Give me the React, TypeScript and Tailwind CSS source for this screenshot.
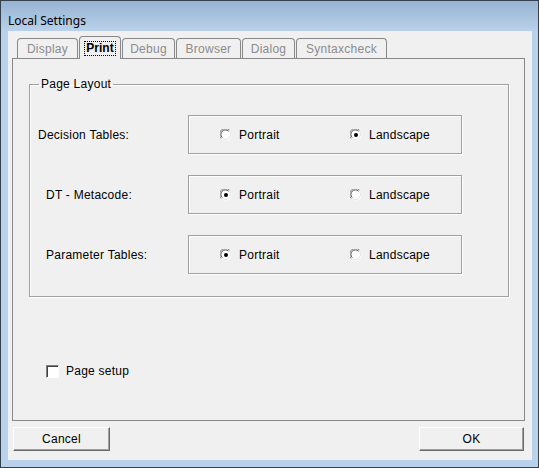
import React from "react";

const font = { fontFamily: '"Liberation Sans", Arial, sans-serif' };

function Radio({ checked }: { checked: boolean }) {
  return (
    <svg width="12" height="12" viewBox="0 0 12 12" className="shrink-0">
      <circle cx="6" cy="6" r="5.5" fill="#ffffff" />
      <path d="M1.2 9.5 A5.3 5.3 0 0 1 9.5 1.2" fill="none" stroke="#8a8a8a" strokeWidth="1" />
      <path d="M2.2 8.6 A4.2 4.2 0 0 1 8.6 2.2" fill="none" stroke="#505050" strokeWidth="1" />
      <path d="M9.8 2.5 A5.3 5.3 0 0 1 2.5 9.8" fill="none" stroke="#e4e4e4" strokeWidth="1" />
      {checked && <circle cx="6" cy="6" r="2" fill="#000000" />}
    </svg>
  );
}

function RadioBox({ portrait }: { portrait: boolean }) {
  return (
    <div className="w-[274px] h-[39px] border border-[#a0a0a0] shadow-[inset_1px_1px_0_#ffffff,1px_1px_0_#ffffff] flex items-center">
      <div className="flex items-center ml-[31px] w-[130px]">
        <Radio checked={portrait} />
        <span className="ml-[7px] text-[12px] tracking-[0.25px] text-black leading-none">Portrait</span>
      </div>
      <div className="flex items-center">
        <Radio checked={!portrait} />
        <span className="ml-[7px] text-[12px] tracking-[0.25px] text-black leading-none">Landscape</span>
      </div>
    </div>
  );
}

function Tab({ label, w, selected }: { label: string; w: number; selected?: boolean }) {
  if (selected) {
    return (
      <div
        className="h-[23px] border border-b-0 border-[#888888] rounded-t-[4px] bg-[#f0f0f0] flex items-center justify-center -mb-px relative z-10 px-[3px]"
        style={{ width: w }}
      >
        <span className="text-[12px] font-bold text-black leading-[13px] outline outline-1 outline-dotted outline-black px-[1px]">
          {label}
        </span>
      </div>
    );
  }
  return (
    <div
      className="h-[20px] border border-b-0 border-[#888888] rounded-t-[4px] flex items-center justify-center text-[12px] tracking-[0.25px] text-[#8c8c8c] leading-none"
      style={{ width: w }}
    >
      {label}
    </div>
  );
}

export default function App() {
  return (
    <div
      className="w-[539px] h-[468px] border border-[#34404c] bg-[#b9d1ea] flex flex-col overflow-hidden"
      style={font}
    >
      <div className="h-[30px] bg-gradient-to-b from-[#98b4d2] to-[#b9d1ea] flex items-center pl-[7px] pt-[10px]">
        <span className="text-[12px] text-black" style={{ fontFamily: '"Noto Sans", "Open Sans", sans-serif' }}>
          Local Settings
        </span>
      </div>
      <div className="ml-[7px] mr-[6px] h-[429px] bg-[#f0f0f0] flex flex-col pt-[4px] px-[4px]">
        <div className="h-[23px] flex items-end pl-[5px]">
          <Tab label="Display" w={61} />
          <div className="w-[1px]" />
          <Tab label="Print" w={42} selected />
          <div className="w-[1px]" />
          <Tab label="Debug" w={53} />
          <div className="w-[1px]" />
          <Tab label="Browser" w={65} />
          <div className="w-[1px]" />
          <Tab label="Dialog" w={53} />
          <div className="w-[1px]" />
          <Tab label="Syntaxcheck" w={91} />
        </div>
        <div className="w-[513px] h-[363px] border border-[#888888] flex flex-col">
          <fieldset className="ml-[16px] mt-[18px] w-[480px] h-[220px] border border-[#a0a0a0] shadow-[inset_1px_1px_0_#ffffff,1px_1px_0_#ffffff] pb-[22px]">
            <legend className="ml-[9px] px-[2px] text-[12px] tracking-[0.25px] text-black leading-[14px]">Page Layout</legend>
            <div className="flex flex-col gap-[21px] mt-[24px]">
              <div className="flex items-center">
                <span className="w-[158px] pl-[8px] text-[12px] tracking-[0.25px] text-black">Decision Tables:</span>
                <RadioBox portrait={false} />
              </div>
              <div className="flex items-center">
                <span className="w-[158px] pl-[16px] text-[12px] tracking-[0.25px] text-black">DT - Metacode:</span>
                <RadioBox portrait={true} />
              </div>
              <div className="flex items-center">
                <span className="w-[158px] pl-[16px] text-[12px] tracking-[0.25px] text-black">Parameter Tables:</span>
                <RadioBox portrait={true} />
              </div>
            </div>
          </fieldset>
          <div className="flex items-center ml-[33px] mt-[65px]">
            <div className="w-[13px] h-[13px] border-t border-l border-t-[#808080] border-l-[#808080] border-b border-r border-b-white border-r-white bg-white shadow-[inset_1px_1px_0_#404040]" />
            <span className="ml-[7px] text-[12px] tracking-[0.25px] text-black">Page setup</span>
          </div>
        </div>
        <div className="flex justify-between mt-[6px] pl-[1px] pr-[4px]">
          <button className="w-[97px] h-[24px] border border-t-white border-l-white border-r-[#696969] border-b-[#696969] shadow-[inset_-1px_-1px_0_#a0a0a0] bg-[#f0f0f0] text-[12px] tracking-[0.25px] text-black">
            Cancel
          </button>
          <button className="w-[105px] h-[24px] border border-t-white border-l-white border-r-[#696969] border-b-[#696969] shadow-[inset_-1px_-1px_0_#a0a0a0] bg-[#f0f0f0] text-[12px] tracking-[0.25px] text-black">
            OK
          </button>
        </div>
      </div>
    </div>
  );
}
